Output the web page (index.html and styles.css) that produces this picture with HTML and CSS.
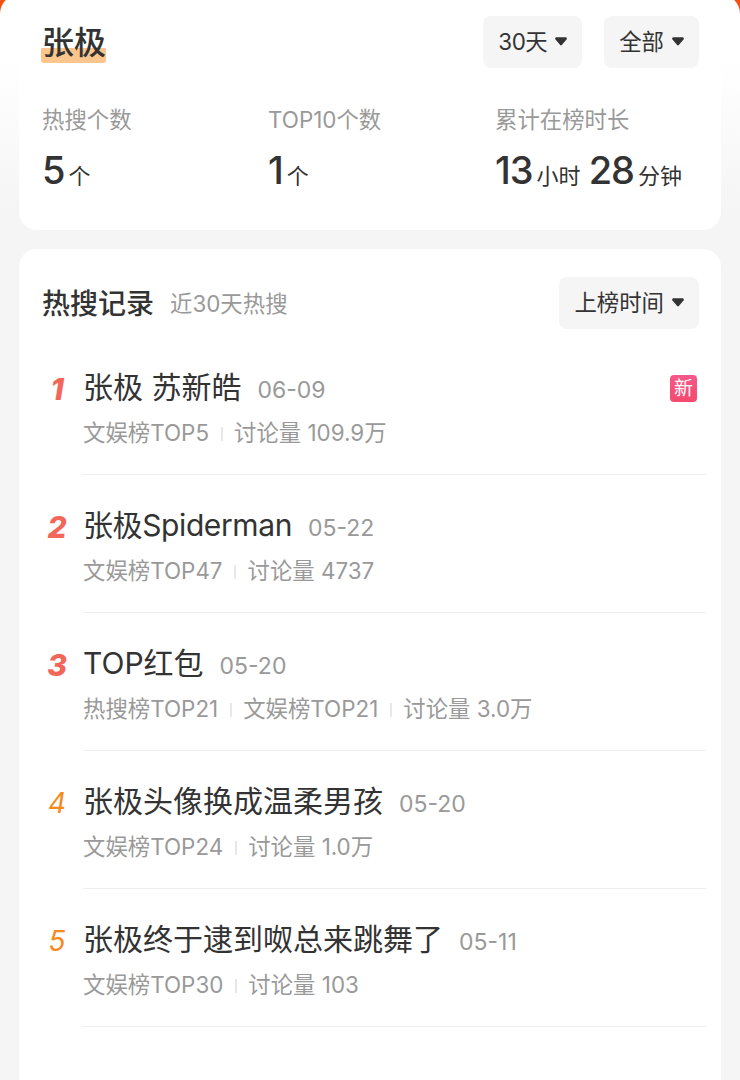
FILE: index.html
```html
<!DOCTYPE html>
<html lang="zh-CN">
<head>
    <meta charset="UTF-8">
    <meta name="viewport" content="width=device-width, initial-scale=1.0">
    <title>张极</title>
    <link rel="stylesheet" href="styles.css">
</head>
<body>
    <div class="sheet">
        <section class="card summary">
            <div class="summary-head">
                <h1 class="name">张极</h1>
                <div class="filters">
                    <div class="select select-days">30天<svg class="caret" viewBox="0 0 13 9"><path d="M1.6 0h9.8c1.2 0 1.9 1.4 1.1 2.3L7.6 8a1.4 1.4 0 0 1-2.2 0L.5 2.3C-.3 1.4.4 0 1.6 0z"/></svg></div>
                    <div class="select">全部<svg class="caret" viewBox="0 0 13 9"><path d="M1.6 0h9.8c1.2 0 1.9 1.4 1.1 2.3L7.6 8a1.4 1.4 0 0 1-2.2 0L.5 2.3C-.3 1.4.4 0 1.6 0z"/></svg></div>
                </div>
            </div>
            <div class="stats">
                <div class="stat stat-a">
                    <div class="stat-label">热搜个数</div>
                    <div class="stat-value"><b>5</b><span>个</span></div>
                </div>
                <div class="stat stat-b">
                    <div class="stat-label">TOP10个数</div>
                    <div class="stat-value"><b>1</b><span>个</span></div>
                </div>
                <div class="stat">
                    <div class="stat-label">累计在榜时长</div>
                    <div class="stat-value"><b>13</b><span>小时</span><b>28</b><span>分钟</span></div>
                </div>
            </div>
        </section>

        <section class="card records">
            <div class="records-head">
                <h2>热搜记录</h2>
                <span class="records-sub">近30天热搜</span>
                <div class="select select-time">上榜时间<svg class="caret" viewBox="0 0 13 9"><path d="M1.6 0h9.8c1.2 0 1.9 1.4 1.1 2.3L7.6 8a1.4 1.4 0 0 1-2.2 0L.5 2.3C-.3 1.4.4 0 1.6 0z"/></svg></div>
            </div>
            <ul class="list">
                <li class="item">
                    <span class="rank rank-top">1</span>
                    <div class="item-body">
                        <div class="item-title">张极 苏新皓<span class="date">06-09</span><span class="tag-new">新</span></div>
                        <div class="item-meta"><span>文娱榜TOP5</span><i></i><span>讨论量 109.9万</span></div>
                    </div>
                </li>
                <li class="item">
                    <span class="rank rank-top">2</span>
                    <div class="item-body">
                        <div class="item-title"><span class="title-tight">张极Spiderman</span><span class="date">05-22</span></div>
                        <div class="item-meta"><span>文娱榜TOP47</span><i></i><span>讨论量 4737</span></div>
                    </div>
                </li>
                <li class="item">
                    <span class="rank rank-top">3</span>
                    <div class="item-body">
                        <div class="item-title">TOP红包<span class="date">05-20</span></div>
                        <div class="item-meta"><span>热搜榜TOP21</span><i></i><span>文娱榜TOP21</span><i></i><span>讨论量 3.0万</span></div>
                    </div>
                </li>
                <li class="item">
                    <span class="rank">4</span>
                    <div class="item-body">
                        <div class="item-title">张极头像换成温柔男孩<span class="date">05-20</span></div>
                        <div class="item-meta"><span>文娱榜TOP24</span><i></i><span>讨论量 1.0万</span></div>
                    </div>
                </li>
                <li class="item">
                    <span class="rank">5</span>
                    <div class="item-body">
                        <div class="item-title">张极终于逮到呶总来跳舞了<span class="date">05-11</span></div>
                        <div class="item-meta"><span>文娱榜TOP30</span><i></i><span>讨论量 103</span></div>
                    </div>
                </li>
            </ul>
        </section>
    </div>
</body>
</html>
```

FILE: styles.css
```css
* {
    box-sizing: border-box;
}

html, body {
    height: 1080px;
    overflow: hidden;
}

body {
    margin: 0;
    background: #f4500f;
    color: #333;
    font-family: Inter, "Noto Sans CJK SC", sans-serif;
}

.sheet {
    height: 1086px;
    margin-top: -6px;
    padding: 0 19px;
    overflow: hidden;
    border-radius: 20px 20px 0 0;
    background: linear-gradient(#fff 66px, #f5f5f5 216px);
}

.card {
    background: #fff;
    border-radius: 18px;
}

.summary {
    height: 236px;
    padding: 22px 22px 0 23px;
}

.summary-head {
    display: flex;
    justify-content: space-between;
    align-items: flex-start;
}

.name {
    margin: 10px 0 0 -1px;
    padding: 0 0 0 1px;
    height: 37px;
    font-size: 32px;
    line-height: 34px;
    font-weight: 500;
    color: #333;
    background: linear-gradient(transparent 22px, #fbc68d 22px);
    border-radius: 3px;
}

.filters {
    display: flex;
    gap: 22px;
}

.select {
    display: flex;
    align-items: center;
    height: 52px;
    padding: 0 15px 4px;
    background: #f5f5f5;
    border-radius: 8px;
    font-size: 22.4px;
    color: #333;
}

.select-days {
    letter-spacing: -0.5px;
}

.caret {
    width: 12px;
    height: 9px;
    margin-left: 8px;
    margin-top: 3px;
    fill: #333;
}

.stats {
    display: flex;
    margin-top: 38px;
}

.stat-a {
    width: 226px;
}

.stat-b {
    width: 227px;
}

.stat-label {
    font-size: 22.4px;
    line-height: 28px;
    color: #999;
}

.stat-value {
    display: flex;
    align-items: baseline;
    margin-top: 14px;
    height: 44px;
    line-height: 44px;
}

.stat-value b {
    font-size: 38px;
    font-weight: 500;
    letter-spacing: -1px;
    color: #333;
}

.stat-value span {
    margin: 0 8px 0 4px;
    font-size: 22px;
}

.records {
    margin-top: 19px;
    height: 831px;
    padding: 28px 15px 0 23px;
    border-radius: 18px 18px 0 0;
}

.records-head {
    display: flex;
    align-items: center;
    padding-right: 7px;
}

.records-head h2 {
    margin: 0 0 3px;
    font-size: 28px;
    font-weight: 500;
    color: #333;
}

.records-sub {
    margin: 0 0 3px 16px;
    font-size: 22.4px;
    color: #999;
}

.select-time {
    margin-left: auto;
}

.list {
    margin: 8px 0 0;
    padding: 0;
    list-style: none;
}

.item {
    display: flex;
    height: 138px;
}

.rank {
    width: 30px;
    margin-right: 11px;
    padding-top: 34px;
    font-size: 28px;
    line-height: 36px;
    font-style: italic;
    text-align: center;
    color: #f78a1d;
}

.rank-top {
    font-size: 30px;
    font-weight: 800;
    color: #f2675a;
}

.item-body {
    flex: 1;
    padding-top: 32px;
    border-bottom: 1px solid #eee;
}

.item-title {
    display: flex;
    align-items: baseline;
    font-size: 30px;
    line-height: 36px;
    color: #333;
}

.title-tight {
    letter-spacing: -0.4px;
}

.date {
    margin-left: 16px;
    font-size: 23px;
    color: #999;
}

.tag-new {
    margin-left: auto;
    margin-right: 9px;
    width: 27px;
    height: 27px;
    align-self: center;
    background: linear-gradient(#f5588a, #f54a6e);
    border-radius: 4px;
    color: #fff;
    font-size: 19px;
    line-height: 27px;
    text-align: center;
}

.item-meta {
    display: flex;
    align-items: center;
    margin-top: 11px;
    font-size: 22.4px;
    line-height: 28px;
    color: #999;
}

.item-meta i {
    width: 2px;
    height: 14px;
    margin: 2px 11.5px 0;
    background: #e8e8e8;
}
```
